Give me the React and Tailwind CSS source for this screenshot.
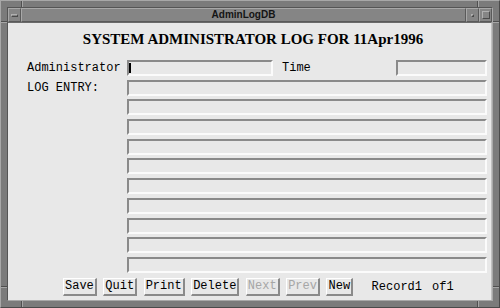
import React from 'react';

const mono = "font-['Liberation_Mono',monospace]";

function Field({ className = '', children }) {
  return (
    <div
      className={`h-[16px] border-2 border-t-[#8a8a8a] border-l-[#8a8a8a] border-b-[#fbfbfb] border-r-[#fbfbfb] bg-[#e8e8e8] flex items-center ${className}`}
    >
      {children}
    </div>
  );
}

function Button({ label, disabled = false }) {
  return (
    <button
      className={`h-[18px] px-[1px] border-t border-l border-t-white border-l-white border-b-2 border-r-2 border-b-[#8a8a8a] border-r-[#8a8a8a] bg-[#e8e8e8] ${mono} text-[12px] leading-none ${disabled ? 'text-[#a6a6a6]' : 'text-black'}`}
    >
      {label}
    </button>
  );
}

function Notch({ className }) {
  // resize-corner marks on the window frame
  return <div className={`absolute ${className}`} />;
}

export default function App() {
  const logRows = Array.from({ length: 9 });

  return (
    <div className="relative w-[500px] h-[308px] bg-[#7b7b7b] border border-t-[#a8a8a8] border-l-[#a8a8a8] border-b-[#4a4a4a] border-r-[#4a4a4a] p-[6px] flex flex-col">
      {/* frame corner marks */}
      <Notch className="left-[20px] top-0 w-[2px] h-[6px] border-l border-l-[#4f4f4f] border-r border-r-[#a6a6a6]" />
      <Notch className="left-0 top-[20px] w-[6px] h-[2px] border-t border-t-[#4f4f4f] border-b border-b-[#a6a6a6]" />
      <Notch className="left-[476px] top-0 w-[2px] h-[6px] border-l border-l-[#4f4f4f] border-r border-r-[#a6a6a6]" />
      <Notch className="right-0 top-[20px] w-[6px] h-[2px] border-t border-t-[#4f4f4f] border-b border-b-[#a6a6a6]" />
      <Notch className="left-0 top-[285px] w-[6px] h-[2px] border-t border-t-[#4f4f4f] border-b border-b-[#a6a6a6]" />
      <Notch className="left-[20px] bottom-0 w-[2px] h-[6px] border-l border-l-[#4f4f4f] border-r border-r-[#a6a6a6]" />
      <Notch className="right-0 top-[285px] w-[6px] h-[2px] border-t border-t-[#4f4f4f] border-b border-b-[#a6a6a6]" />
      <Notch className="left-[476px] bottom-0 w-[2px] h-[6px] border-l border-l-[#4f4f4f] border-r border-r-[#a6a6a6]" />

      <div className="flex-1 flex flex-col border border-t-[#555555] border-l-[#555555] border-b-[#a8a8a8] border-r-[#a8a8a8]">
        {/* title bar */}
        <div className="h-[14px] flex bg-[#858585]">
          <div className="w-[13px] flex items-center justify-center border border-t-[#a8a8a8] border-l-[#a8a8a8] border-b-[#5a5a5a] border-r-[#5a5a5a]">
            <div className="w-[7px] h-[3px] border border-t-[#b0b0b0] border-l-[#b0b0b0] border-b-[#4a4a4a] border-r-[#4a4a4a]" />
          </div>
          <div className="flex-1 flex items-center justify-center border border-t-[#a8a8a8] border-l-[#a8a8a8] border-b-[#5a5a5a] border-r-[#5a5a5a] font-['Liberation_Sans',sans-serif] font-bold text-[10px] leading-none text-[#141414]">
            AdminLogDB
          </div>
          <div className="w-[13px] flex items-center justify-center border border-t-[#a8a8a8] border-l-[#a8a8a8] border-b-[#5a5a5a] border-r-[#5a5a5a]">
            <div className="w-[3px] h-[3px] border border-t-[#b0b0b0] border-l-[#b0b0b0] border-b-[#4a4a4a] border-r-[#4a4a4a]" />
          </div>
          <div className="w-[13px] flex items-center justify-center border border-t-[#a8a8a8] border-l-[#a8a8a8] border-b-[#5a5a5a] border-r-[#5a5a5a]">
            <div className="w-[8px] h-[8px] border border-t-[#b0b0b0] border-l-[#b0b0b0] border-b-[#4a4a4a] border-r-[#4a4a4a]" />
          </div>
        </div>

        {/* content */}
        <div className="flex-1 bg-[#e8e8e8] border-t border-t-[#6a6a6a] border-r border-r-[#c0c0c0] flex flex-col">
          <h1 className="mt-[7px] pl-[7px] text-center font-['Liberation_Serif',serif] font-bold text-[15px] leading-[18px] text-black">
            SYSTEM ADMINISTRATOR LOG FOR 11Apr1996
          </h1>

          <div className={`mt-[12px] pl-[19px] flex flex-col gap-[3.7px] ${mono} text-[12px] leading-none text-black`}>
            <div className="flex items-center">
              <span className="w-[100px]">Administrator</span>
              <Field className="w-[146px]">
                <div className="w-[2px] h-[10px] bg-black" />
              </Field>
              <span className="ml-[9px] w-[114px]">Time</span>
              <Field className="w-[91px]" />
            </div>
            <div className="flex items-center">
              <span className="w-[100px]">LOG ENTRY:</span>
              <Field className="w-[360px]" />
            </div>
            {logRows.map((_, i) => (
              <div key={i} className="flex items-center">
                <Field className="ml-[100px] w-[360px]" />
              </div>
            ))}
          </div>

          <div className="mt-[5px] pl-[55px] flex items-center gap-[6.5px]">
            <Button label="Save" />
            <Button label="Quit" />
            <Button label="Print" />
            <Button label="Delete" />
            <Button label="Next" disabled />
            <Button label="Prev" disabled />
            <Button label="New" />
            <span className={`ml-[12px] ${mono} text-[12px] leading-none text-black`}>
              Record1<span className="ml-[10px]">of1</span>
            </span>
          </div>
        </div>
      </div>
    </div>
  );
}
